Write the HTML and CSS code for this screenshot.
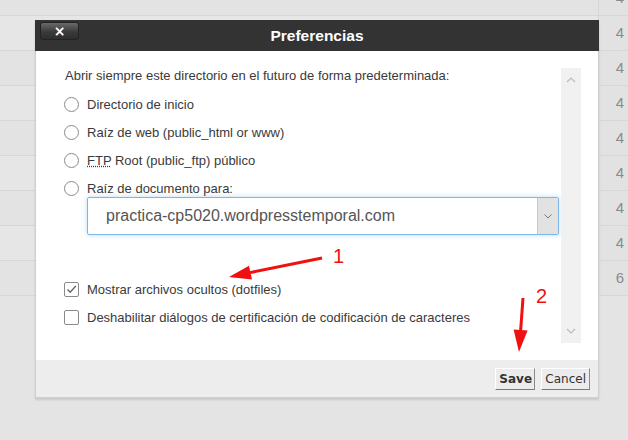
FILE: index.html
```html
<!DOCTYPE html>
<html lang="es">

<head>
  <meta charset="UTF-8">
  <meta name="viewport" content="width=device-width, initial-scale=1.0">
  <title>Preferencias</title>
  <link rel="stylesheet" href="styles.css">
</head>

<body>
  <section class="table">
    <div class="row"><span class="num">4</span></div>
    <div class="row"><span class="num">4</span></div>
    <div class="row"><span class="num">4</span></div>
    <div class="row"><span class="num">4</span></div>
    <div class="row"><span class="num">4</span></div>
    <div class="row"><span class="num">4</span></div>
    <div class="row"><span class="num">4</span></div>
    <div class="row"><span class="num">4</span></div>
    <div class="row"><span class="num">6</span></div>
  </section>

  <div class="dialog">
    <header class="dialog-title">
      <button class="btn-close">&times;</button>
      <h1>Preferencias</h1>
    </header>

    <div class="dialog-body">
      <div class="scroll-box">
        <div class="scroll-content">
          <p class="intro">Abrir siempre este directorio en el futuro de forma predeterminada:</p>
          <label class="option"><span class="radio"></span><span>Directorio de inicio</span></label>
          <label class="option"><span class="radio"></span><span>Raíz de web (public_html or www)</span></label>
          <label class="option"><span class="radio"></span><span><abbr>FTP</abbr> Root (public_ftp) público</span></label>
          <label class="option"><span class="radio"></span><span>Raíz de documento para:</span></label>

          <div class="select">
            <span class="select-value">practica-cp5020.wordpresstemporal.com</span>
            <span class="select-arrow">
              <svg width="8" height="5" viewBox="0 0 8 5"><path d="M0.5 0.5 L4 4 L7.5 0.5" fill="none" stroke="#777" stroke-width="1"/></svg>
            </span>
          </div>

          <label class="option option-first-check">
            <span class="checkbox">
              <svg width="13" height="13" viewBox="0 0 13 13"><path d="M2.5 6.5 L5.2 9.3 L10.8 3" fill="none" stroke="#666" stroke-width="1.4"/></svg>
            </span>
            <span>Mostrar archivos ocultos (dotfiles)</span>
          </label>
          <label class="option"><span class="checkbox"></span><span>Deshabilitar diálogos de certificación de codificación de caracteres</span></label>
        </div>

        <div class="scrollbar">
          <svg width="10" height="6" viewBox="0 0 10 6"><path d="M1 5 L5 1 L9 5" fill="none" stroke="#bbb" stroke-width="1.2"/></svg>
          <svg width="10" height="6" viewBox="0 0 10 6"><path d="M1 1 L5 5 L9 1" fill="none" stroke="#bbb" stroke-width="1.2"/></svg>
        </div>
      </div>
    </div>

    <footer class="dialog-footer">
      <button class="btn btn-save">Save</button>
      <button class="btn">Cancel</button>
    </footer>
  </div>

  <!-- flechas rojas de la captura -->
  <svg class="notes" width="628" height="440" viewBox="0 0 628 440">
    <line x1="322" y1="258" x2="250" y2="272.6" stroke="#f01010" stroke-width="3"/>
    <polygon points="229,277 249,265.7 252,279.5" fill="#f01010"/>
    <text x="333" y="263" class="note-num">1</text>
    <line x1="523" y1="298" x2="520.6" y2="331" stroke="#f01010" stroke-width="3"/>
    <polygon points="519,352 513.6,329.5 527.6,330.5" fill="#f01010"/>
    <text x="536" y="303" class="note-num">2</text>
  </svg>
</body>

</html>
```

FILE: styles.css
```css
*,
*::after,
*::before {
  box-sizing: border-box;
}

body {
  margin: 0;
  height: 440px;
  overflow: hidden;
  background-color: #e4e4e4;
  font-family: "Liberation Sans", Arial, sans-serif;
  font-size: 13px;
  color: #3a3a3a;
}

/* tabla de fondo */
.table {
  margin-top: -19px;
}

.row {
  display: flex;
  justify-content: flex-end;
  height: 35px;
  border-bottom: 1px solid #d7d7d7;
  background-color: #e6e6e6;
}

.row:nth-child(odd) {
  background-color: #e3e3e3;
}

.num {
  width: 30px;
  border-left: 1px solid #d7d7d7;
  background-color: #e2e2e2;
  padding-right: 4px;
  text-align: right;
  font-size: 15px;
  line-height: 34px;
  color: #8a8a8a;
}

/* dialogo */
.dialog {
  position: absolute;
  top: 20px;
  left: 35px;
  width: 564px;
  box-shadow: 0 2px 2px rgba(0, 0, 0, 0.12);
}

.dialog-title {
  display: grid;
  grid-template-columns: 1fr auto 1fr;
  align-items: center;
  height: 31px;
  background-color: #333;
}

.dialog-title h1 {
  margin: 0;
  font-size: 15.5px;
  font-weight: bold;
  color: #fff;
}

.btn-close {
  justify-self: start;
  align-self: start;
  margin: 2px 0 0 5px;
  width: 39px;
  height: 18px;
  padding: 0;
  border: 1px solid #222;
  border-radius: 3px;
  background: linear-gradient(#6a6a6a, #3a3a3a 55%, #2e2e2e);
  color: #fff;
  font-family: "DejaVu Sans", sans-serif;
  font-size: 14px;
  font-weight: bold;
  line-height: 15px;
}

.dialog-body {
  height: 309px;
  padding: 17px 17px 17px 16px;
  background-color: #fff;
  border-left: 1px solid #cfcfcf;
  border-right: 1px solid #cfcfcf;
}

.scroll-box {
  display: flex;
  height: 275px;
}

.scroll-content {
  flex: 1;
  padding-left: 12px;
}

.intro {
  margin: 0 0 11px 1px;
  line-height: 16px;
}

.option {
  display: flex;
  align-items: center;
  gap: 8px;
  height: 18px;
  margin-top: 10px;
}

.option-first-check {
  margin-top: 45px;
}

abbr {
  text-decoration: underline dotted;
}

.radio {
  width: 15px;
  height: 15px;
  border: 1px solid #8a8a8a;
  border-radius: 50%;
  background-color: #fff;
}

.checkbox {
  display: flex;
  align-items: center;
  justify-content: center;
  width: 15px;
  height: 15px;
  border: 1px solid #8a8a8a;
  border-radius: 2px;
  background-color: #fff;
}

.select {
  display: flex;
  width: 472px;
  height: 38px;
  margin-left: 23px;
  border: 1px solid #7fb6e6;
  border-radius: 2px;
  box-shadow: 0 0 5px rgba(102, 175, 233, 0.45);
}

.select-value {
  flex: 1;
  padding-left: 18px;
  font-size: 16px;
  line-height: 36px;
  color: #555;
}

.select-arrow {
  display: flex;
  align-items: center;
  justify-content: center;
  width: 21px;
  border-left: 1px solid #c8c8c8;
  background-color: #e2e2e2;
}

.scrollbar {
  display: flex;
  flex-direction: column;
  justify-content: space-between;
  align-items: center;
  width: 20px;
  padding: 9px 0 9px;
  background-color: #f1f1f1;
}

.dialog-footer {
  display: flex;
  justify-content: flex-end;
  align-items: flex-start;
  gap: 6px;
  height: 38px;
  padding: 8px 8px 0 0;
  background-color: #ededed;
  border: 1px solid #cfcfcf;
  border-top: none;
}

.btn {
  height: 22px;
  padding: 0 3px;
  border: 1px solid;
  border-color: #fff #8a8a8a #7a7a7a #fff;
  background-color: #ececec;
  font-family: "DejaVu Sans", sans-serif;
  font-size: 12px;
  color: #333;
}

.btn-save {
  width: 40px;
  font-weight: bold;
}

.notes {
  position: absolute;
  top: 0;
  left: 0;
  pointer-events: none;
}

.note-num {
  font-family: "Liberation Sans", Arial, sans-serif;
  font-size: 20px;
  fill: #f01010;
}
```
